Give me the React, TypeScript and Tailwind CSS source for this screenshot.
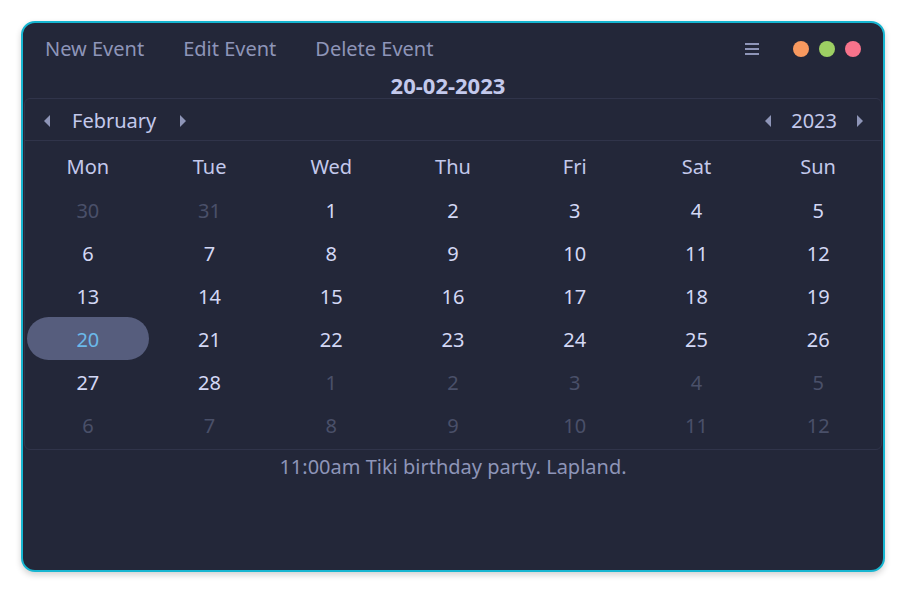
import React from "react";

const weekdays = ["Mon", "Tue", "Wed", "Thu", "Fri", "Sat", "Sun"];

const days: { n: number; dim?: boolean; sel?: boolean }[] = [
  { n: 30, dim: true },
  { n: 31, dim: true },
  ...Array.from({ length: 28 }, (_, i) => ({ n: i + 1, sel: i + 1 === 20 })),
  ...Array.from({ length: 12 }, (_, i) => ({ n: i + 1, dim: true })),
];

function Arrow({ dir }: { dir: "left" | "right" }) {
  return (
    <svg width="6" height="12" viewBox="0 0 6 12" className="text-[#8e95b8]">
      {dir === "left" ? (
        <path d="M6 0 L0 6 L6 12 Z" fill="currentColor" />
      ) : (
        <path d="M0 0 L6 6 L0 12 Z" fill="currentColor" />
      )}
    </svg>
  );
}

export default function App() {
  return (
    <div className="min-h-screen bg-white pt-[21px] pl-[21px] font-['Noto_Sans',sans-serif]">
      <div className="w-[864px] h-[551px] rounded-[14px] border-2 border-[#17b6d1] bg-[#232739] flex flex-col overflow-hidden shadow-[0_3px_6px_rgba(0,0,0,0.18)]">
        {/* top bar */}
        <div className="h-[51px] flex items-center pl-[22px] pr-[22px]">
          <div className="flex items-center gap-[39px] text-[20px] text-[#8e95b8]">
            <span>New Event</span>
            <span>Edit Event</span>
            <span>Delete Event</span>
          </div>
          <div className="ml-auto flex items-center">
            <div className="flex flex-col gap-[3px] mr-[34px]">
              <div className="w-[14px] h-[2px] bg-[#8e95b8]" />
              <div className="w-[14px] h-[2px] bg-[#8e95b8]" />
              <div className="w-[14px] h-[2px] bg-[#8e95b8]" />
            </div>
            <div className="flex items-center gap-[10px]">
              <div className="w-4 h-4 rounded-full bg-[#f8995f]" />
              <div className="w-4 h-4 rounded-full bg-[#9dcf63]" />
              <div className="w-4 h-4 rounded-full bg-[#f7738b]" />
            </div>
          </div>
        </div>

        <div className="h-[24px] flex items-center justify-center pr-[10px] pb-[2px] text-[22px] font-bold text-[#c3c9ec]">
          20-02-2023
        </div>

        {/* calendar */}
        <div className="mx-px border border-[#30344a] rounded-[6px] flex flex-col">
          <div className="h-[42px] flex items-center pt-[2px] border-b border-[#30344a] text-[20px] text-[#c3c9ec]">
            <div className="flex items-center pl-[19px]">
              <Arrow dir="left" />
              <span className="ml-[22px] mr-[24px]">February</span>
              <Arrow dir="right" />
            </div>
            <div className="ml-auto flex items-center pr-[18px]">
              <Arrow dir="left" />
              <span className="ml-[20px] mr-[20px]">2023</span>
              <Arrow dir="right" />
            </div>
          </div>
          <div className="px-[2px] pb-[3px]">
            <div className="grid grid-cols-7 h-[47px] items-center pt-[5px] text-[20px] text-[#c3c9ec]">
              {weekdays.map((d) => (
                <div key={d} className="text-center">
                  {d}
                </div>
              ))}
            </div>
            <div className="grid grid-cols-7 text-[20px]">
              {days.map((d, i) => (
                <div
                  key={i}
                  className={
                    "h-[43px] flex items-center justify-center pt-[2px] " +
                    (d.sel
                      ? "rounded-full bg-[#565d7d] text-[#6bb9ea]"
                      : d.dim
                      ? "text-[#4a5069]"
                      : "text-[#d3d8f5]")
                  }
                >
                  {d.n}
                </div>
              ))}
            </div>
          </div>
        </div>

        <div className="pt-[2px] text-center text-[20px] text-[#8e95b8]">
          11:00am Tiki birthday party. Lapland.
        </div>
      </div>
    </div>
  );
}
